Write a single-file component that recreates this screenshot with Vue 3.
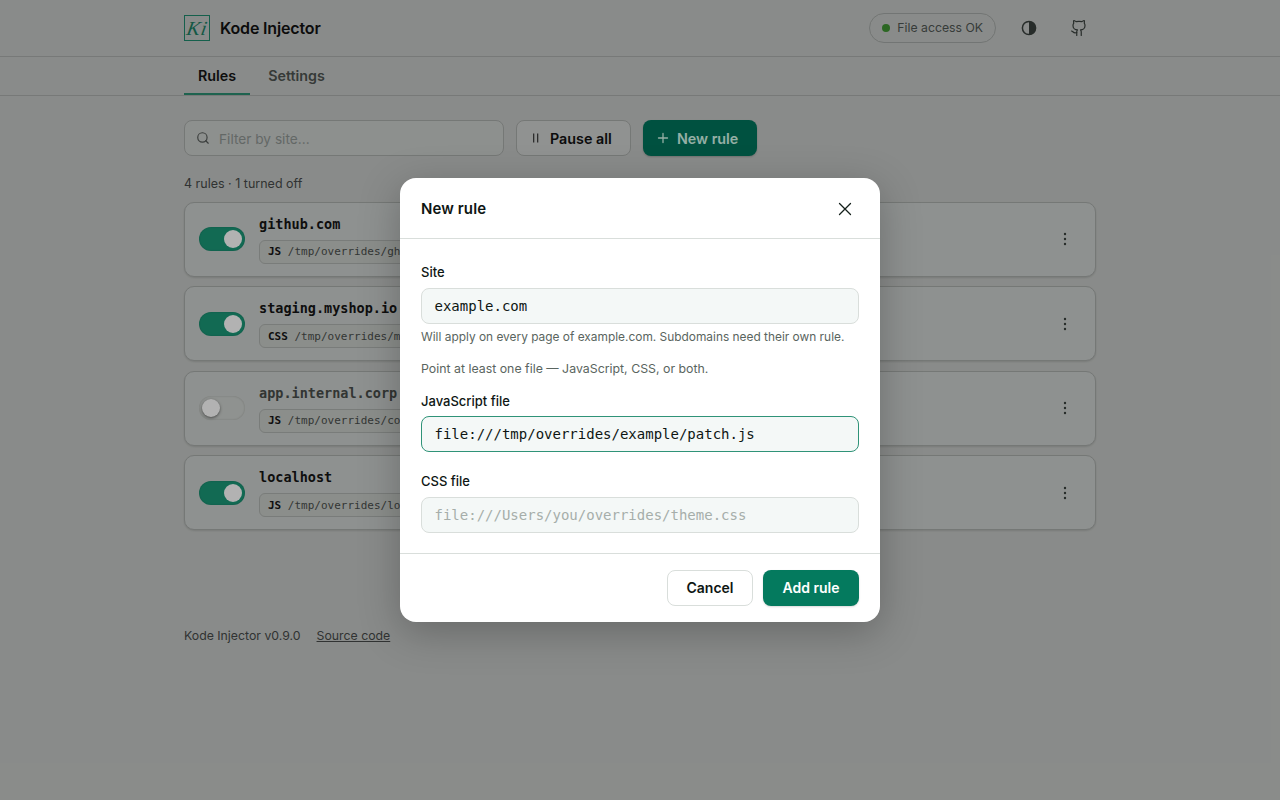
<script setup>
const rules = [
  { site: 'github.com', type: 'JS', path: '/tmp/overrides/gh.js', on: true },
  { site: 'staging.myshop.io', type: 'CSS', path: '/tmp/overrides/m.css', on: true },
  { site: 'app.internal.corp', type: 'JS', path: '/tmp/overrides/co.js', on: false },
  { site: 'localhost', type: 'JS', path: '/tmp/overrides/lo.js', on: true },
]
</script>

<template>
  <div class="page">
    <header class="top">
      <div class="wrap top-in">
        <div class="logo"><span>Ki</span></div>
        <div class="brand">Kode Injector</div>
        <div class="spacer"></div>
        <div class="status"><span class="dot"></span><span class="status-text">File access OK</span></div>
        <button class="icon-btn theme" aria-label="Theme">
          <svg width="16" height="16" viewBox="0 0 16 16"><circle cx="8" cy="8" r="6.6" fill="none" stroke="currentColor" stroke-width="1.5"/><path d="M8 1.4a6.6 6.6 0 0 1 0 13.2z" fill="currentColor"/></svg>
        </button>
        <button class="icon-btn" aria-label="GitHub">
          <svg width="18" height="18" viewBox="0 0 24 24" fill="none" stroke="currentColor" stroke-width="1.6" stroke-linecap="round" stroke-linejoin="round"><path d="M15 22v-4a4.8 4.8 0 0 0-1-3.5c3 0 6-2 6-5.5.08-1.25-.27-2.48-1-3.5.28-1.15.28-2.35 0-3.5 0 0-1 0-3 1.5-2.64-.5-5.36-.5-8 0C6 2 5 2 5 2c-.3 1.15-.3 2.35 0 3.5A5.403 5.403 0 0 0 4 9c0 3.5 3 5.5 6 5.5-.39.49-.68 1.05-.85 1.65-.17.6-.22 1.23-.15 1.85v4"/><path d="M9 18c-4.51 2-5-2-7-2"/></svg>
        </button>
      </div>
    </header>
    <nav class="tabs">
      <div class="wrap tabs-in">
        <a class="tab active">Rules</a>
        <a class="tab">Settings</a>
      </div>
    </nav>
    <main class="wrap main">
      <div class="toolbar">
        <div class="filter">
          <svg width="14" height="14" viewBox="0 0 24 24" fill="none" stroke="currentColor" stroke-width="2" stroke-linecap="round"><circle cx="11" cy="11" r="8"/><path d="m21 21-4.3-4.3"/></svg>
          <span>Filter by site...</span>
        </div>
        <button class="btn ghost">
          <svg width="12" height="12" viewBox="0 0 12 12" fill="currentColor" opacity=".75"><rect x="3" y="1.5" width="1.3" height="9"/><rect x="7" y="1.5" width="1.3" height="9"/></svg>
          Pause all
        </button>
        <button class="btn solid">
          <svg width="12" height="12" viewBox="0 0 12 12" fill="none" stroke="currentColor" stroke-width="1.3" stroke-linecap="round"><path d="M6 1.5v9M1.5 6h9"/></svg>
          New rule
        </button>
      </div>
      <div class="count">4 rules · 1 turned off</div>
      <div class="list">
        <div v-for="r in rules" :key="r.site" class="card">
          <div class="toggle" :class="{ on: r.on }"><span class="knob"></span></div>
          <div class="info">
            <div class="site" :class="{ off: !r.on }">{{ r.site }}</div>
            <div class="pill"><b>{{ r.type }}</b>&nbsp;{{ r.path }}</div>
          </div>
          <div class="spacer"></div>
          <svg class="more" width="16" height="16" viewBox="0 0 16 16" fill="currentColor"><circle cx="8" cy="3" r="1.2"/><circle cx="8" cy="8" r="1.2"/><circle cx="8" cy="13" r="1.2"/></svg>
        </div>
      </div>
      <footer class="foot">
        <span>Kode Injector v0.9.0</span>
        <a>Source code</a>
      </footer>
    </main>

    <div class="overlay">
      <section class="modal">
        <div class="m-head">
          <h2>New rule</h2>
          <svg width="16" height="16" viewBox="0 0 16 16" fill="none" stroke="currentColor" stroke-width="1.3" stroke-linecap="round"><path d="M2.5 2.5l11 11M13.5 2.5l-11 11"/></svg>
        </div>
        <div class="m-body">
          <label class="lab">Site</label>
          <div class="field">example.com</div>
          <p class="hint first">Will apply on every page of example.com. Subdomains need their own rule.</p>
          <p class="hint point">Point at least one file — JavaScript, CSS, or both.</p>
          <label class="lab js">JavaScript file</label>
          <div class="field focus">file:///tmp/overrides/example/patch.js</div>
          <label class="lab second">CSS file</label>
          <div class="field ph">file:///Users/you/overrides/theme.css</div>
        </div>
        <div class="m-foot">
          <button class="mbtn cancel">Cancel</button>
          <button class="mbtn add">Add rule</button>
        </div>
      </section>
    </div>
  </div>
</template>

<style>
html, body { margin: 0; background: #c5c8c6; }
</style>

<style scoped>
.page { position: relative; height: 800px; overflow: hidden; background: #c5c8c6; font-family: Inter, "Liberation Sans", sans-serif; color: #151515; }
.wrap { width: 912px; margin: 0 auto; }
.spacer { flex: 1; }
.top { height: 56px; border-bottom: 1px solid #abaeac; }
.top-in { height: 56px; display: flex; align-items: center; }
.logo { width: 24px; height: 24px; border: 1px solid #1f8a6d; font: italic 20px/24px "Liberation Serif", serif; color: #1d7f64; text-align: center; }
.logo span { display: inline-block; transform: skewX(-10deg); letter-spacing: 1px; }
.brand { margin-left: 10px; font-size: 16px; font-weight: 600; color: #121212; letter-spacing: -0.15px; }
.status { height: 28px; padding: 0 12px; display: flex; align-items: center; gap: 7px; border: 1px solid #a4a8a6; border-radius: 15px; font-size: 12.25px; color: #4f5653; }
.status-text { margin-top: -1px; }
.dot { width: 8px; height: 8px; border-radius: 50%; background: #3f9433; }
.icon-btn { width: 34px; height: 34px; margin-left: 16px; padding: 0; display: flex; align-items: center; justify-content: center; border: 0; background: none; color: #39403d; }
.tabs { height: 38px; border-bottom: 1px solid #abaeac; }
.tabs-in { display: flex; gap: 4px; height: 38px; }
.tab { padding: 0 14px; display: flex; align-items: center; font-size: 14.3px; font-weight: 600; color: #4e5451; height: 36px; border-bottom: 2px solid transparent; }
.tab.active { color: #151515; border-bottom-color: #2b8f72; }
.main { padding-top: 24px; }
.toolbar { display: flex; gap: 12px; }
.filter { width: 320px; box-sizing: border-box; height: 36px; padding: 0 12px 0 11px; display: flex; align-items: center; gap: 9px; border: 1px solid #a8acaa; border-radius: 8px; background: #cbcecc; color: #545a57; font-size: 13.7px; }
.filter span { color: #8f9693; margin-top: 1px; }
.btn { height: 36px; box-sizing: border-box; padding: 0 0 0 13px; display: flex; align-items: center; gap: 8px; border-radius: 8px; font: 600 14.3px Inter, sans-serif; }
.ghost { width: 115px; border: 1px solid #a8acaa; background: #cfd1d0; color: #121212; }
.solid { width: 114px; border: 0; background: #01755c; color: #d6faec; padding-left: 14px; box-shadow: 0 1px 2px rgba(0,0,0,.2); }
.count { margin-top: 20px; font-size: 12.5px; line-height: 16px; color: #474a49; }
.list { margin-top: 9.5px; display: flex; flex-direction: column; gap: 9.5px; }
.card { height: 75px; box-sizing: border-box; padding: 0 22px 0 14px; display: flex; align-items: center; border: 1px solid #a8acaa; border-radius: 10px; background: #ccd0ce; box-shadow: 0 1px 2px rgba(0,0,0,.12); }
.toggle { width: 46px; height: 24px; box-sizing: border-box; border-radius: 12px; background: #cdd1ce; position: relative; flex: none; box-shadow: inset 0 0 2px rgba(0,0,0,.2); }
.toggle.on { background: #1b9878; }
.knob { position: absolute; left: 3px; top: 3px; width: 18px; height: 18px; border-radius: 50%; background: #fff; box-shadow: 0 1px 3px rgba(0,0,0,.5); }
.toggle.on .knob { left: 25px; box-shadow: none; }
.info { margin-left: 14px; }
.site { font: 700 13.5px/18px "DejaVu Sans Mono", monospace; color: #151515; }
.site.off { color: #484d4a; }
.pill { margin-top: 7px; height: 24px; box-sizing: border-box; padding: 0 8px; display: inline-flex; align-items: center; border: 1px solid #aeb2af; border-radius: 6px; background: #c8ccc8; font: 11px "DejaVu Sans Mono", monospace; color: #4a4f4c; white-space: nowrap; width: 200px; }
.pill b { color: #151515; }
.more { color: #39403d; }
.foot { margin-top: 97.5px; display: flex; gap: 16px; font-size: 12.3px; line-height: 16px; color: #474a49; }
.foot a { text-decoration: underline; }

.overlay { position: absolute; inset: 0; display: flex; align-items: center; justify-content: center; background: rgba(0, 0, 0, .3); }
.modal { width: 480px; height: 444px; box-sizing: border-box; border-radius: 16px; background: #fff; box-shadow: 0 10px 40px rgba(0,0,0,.25); display: flex; flex-direction: column; }
.m-head { height: 61px; box-sizing: border-box; padding: 1px 27px 0 21px; display: flex; align-items: center; justify-content: space-between; border-bottom: 1px solid #d9dedb; color: #14201b; }
h2 { margin: 0; font-size: 15px; font-weight: 600; letter-spacing: .1px; color: #0e1613; }
.m-body { flex: 1; padding: 24.5px 21px 0; display: flex; flex-direction: column; }
.lab { font-size: 13px; font-weight: 500; line-height: 17px; color: #0e1613; margin-bottom: 7px; }
.lab.js { margin-bottom: 6px; }
.lab.second { margin-top: 21px; margin-bottom: 7px; }
.field { height: 36px; box-sizing: border-box; padding: 0 12.5px; display: flex; align-items: center; border: 1px solid #d9dedb; border-radius: 8px; background: #f4f8f7; font: 14px "DejaVu Sans Mono", monospace; color: #0e1613; }
.field.focus { border-color: #2f9378; }
.field.ph { color: #a6aeaa; }
.hint { margin: 5px 0 0; font-size: 12px; line-height: 16px; color: #5a6560; }
.first { font-size: 11.9px; }
.point { margin: 16px 0 16px; font-size: 12.35px; }
.m-foot { height: 69px; box-sizing: border-box; padding: 16px 21px; display: flex; justify-content: flex-end; gap: 10px; border-top: 1px solid #d9dedb; }
.mbtn { height: 36px; box-sizing: border-box; border-radius: 8px; font: 600 14px Inter, sans-serif; padding: 0 0 1px; }
.cancel { width: 86px; border: 1px solid #d9dedb; background: #fff; color: #0e1613; }
.add { width: 96px; border: 0; background: #047a5e; color: #fff; box-shadow: 0 1px 2px rgba(0,0,0,.15); }
</style>
